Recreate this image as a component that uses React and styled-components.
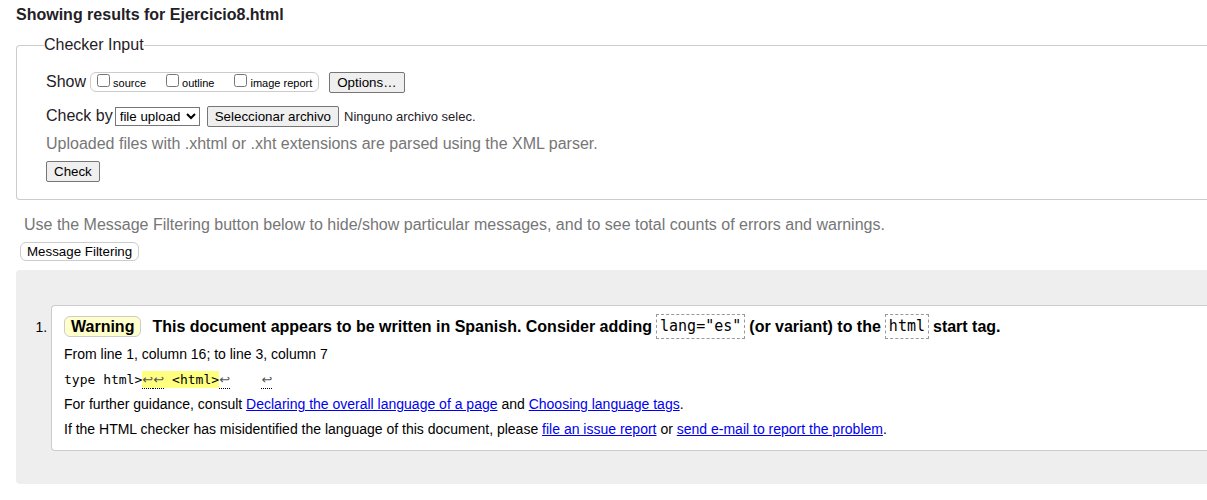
import React, { useRef } from "react";
import styled, { createGlobalStyle } from "styled-components";

const GlobalStyle = createGlobalStyle`
  * { box-sizing: border-box; }
  body {
    margin: 0;
    background: #fff;
    color: #000;
    font-family: "Liberation Sans", Arial, sans-serif;
    font-size: 14px;
  }
`;

const Page = styled.main`
  padding: 5px 0 15px 16px;
`;

const Title = styled.h1`
  margin: 0 0 10px;
  font-size: 16px;
  line-height: 20px;
  color: #1f2126;
`;

const InputPanel = styled.fieldset`
  margin: 0;
  padding: 10px 0 12px 29px;
  border: 1px solid #ccc;
  border-right: 0;
  border-radius: 4px 0 0 4px;
  color: #1f2126;
`;

const Legend = styled.legend`
  margin-left: -2px;
  padding: 0;
  font-size: 16px;
  line-height: 20px;
`;

const Row = styled.div`
  display: flex;
  align-items: center;
  height: ${(p) => p.$height || 34}px;
  font-size: 16px;
`;

const RowLabel = styled.label`
  line-height: 20px;
  margin-right: ${(p) => p.$gap || 2}px;
`;

const OptionGroup = styled.div`
  display: flex;
  gap: 20px;
  height: 20px;
  padding: 0 6px;
  margin-right: 10px;
  border: 1px solid #ccc;
  border-radius: 6px;
`;

const Option = styled.label`
  display: flex;
  gap: 3px;
  font-size: 11px;
  line-height: 20px;
  color: #000;
`;

const Checkbox = styled.input`
  width: 13px;
  height: 13px;
  margin: 1px 0 0;
`;

const Button = styled.button`
  height: 21px;
  padding: 0 7px;
  border: 1px solid #767676;
  border-radius: 2px;
  background: #efefef;
  color: #000;
  font-family: inherit;
  line-height: 19px;
`;

const Select = styled.select`
  width: 85px;
  height: 19px;
  margin-right: 7px;
  padding: 0;
  border: 1px solid #767676;
  border-radius: 0;
  background: #fff;
  color: #000;
  font-family: inherit;
`;

const FileName = styled.span`
  margin-left: 5px;
  font-size: 13px;
`;

const Hint = styled.p`
  margin: ${(p) => p.$margin || "0"};
  font-size: 16px;
  line-height: 22px;
  color: #767676;
`;

const FilterButton = styled(Button)`
  display: block;
  height: 19px;
  margin: 6px 0 9px 4px;
  padding: 0 6px;
  border-color: #ccc;
  border-radius: 6px;
  background: #fff;
  line-height: 17px;
`;

const Results = styled.ol`
  margin: 0;
  padding: 35px 0 33px 35px;
  border-radius: 4px 0 0 4px;
  background: #eee;
`;

const Message = styled.li`
  padding: 7px 12px 8px;
  border: 1px solid #ccc;
  border-right: 0;
  border-radius: 4px 0 0 4px;
  background: #fff;
`;

const Headline = styled.h2`
  display: flex;
  align-items: center;
  gap: 4px;
  height: 27px;
  margin: 0 0 2px;
  font-size: 16px;
`;

const Badge = styled.span`
  margin-right: 7px;
  padding: 0 6px;
  border: 1px solid #ccc;
  border-radius: 6px;
  background: #ffc;
  line-height: 19px;
`;

const Code = styled.code`
  padding: 0 3px;
  border: 1px dashed #999;
  font-family: "DejaVu Sans Mono", monospace;
  font-size: 15px;
  font-weight: 400;
  line-height: 23px;
`;

const Line = styled.p`
  margin: 0;
  line-height: 25px;
`;

const Extract = styled.code`
  display: flex;
  align-items: center;
  height: 25px;
  font-family: "DejaVu Sans Mono", monospace;
  font-size: 13px;
  line-height: 17px;
  white-space: pre;
`;

const Highlight = styled.mark`
  display: flex;
  background: #ffff80;
  color: inherit;
`;

const Break = styled.span`
  width: 11px;
  height: 18px;
  margin-bottom: -1px;
  border-bottom: 1px dotted #000;
  color: #555;
  font-family: "DejaVu Sans", sans-serif;
  text-align: center;
`;

const Link = styled.a`
  color: #00e;
`;

const outputs = ["source", "outline", "image report"];

export default function App() {
  const file = useRef(null);
  return (
    <>
      <GlobalStyle />
      <Page>
        <Title>Showing results for Ejercicio8.html</Title>
        <InputPanel>
          <Legend>Checker Input</Legend>
          <Row>
            <RowLabel as="span" $gap={4}>Show</RowLabel>
            <OptionGroup>
              {outputs.map((name) => (
                <Option key={name}>
                  <Checkbox type="checkbox" />
                  {name}
                </Option>
              ))}
            </OptionGroup>
            <Button type="button">Options…</Button>
          </Row>
          <Row>
            <RowLabel htmlFor="method">Check by</RowLabel>
            <Select id="method">
              <option>file upload</option>
            </Select>
            <input ref={file} type="file" hidden aria-label="Seleccionar archivo" />
            <Button type="button" onClick={() => file.current.click()}>
              Seleccionar archivo
            </Button>
            <FileName>Ninguno archivo selec.</FileName>
          </Row>
          <Hint>Uploaded files with .xhtml or .xht extensions are parsed using the XML parser.</Hint>
          <Row $height={32}>
            <Button type="button">Check</Button>
          </Row>
        </InputPanel>
        <Hint $margin="14px 0 0 8px">
          Use the Message Filtering button below to hide/show particular messages, and to see total
          counts of errors and warnings.
        </Hint>
        <FilterButton type="button">Message Filtering</FilterButton>
        <Results>
          <Message>
            <Headline>
              <Badge>Warning</Badge>
              <span>This document appears to be written in Spanish. Consider adding</span>
              <Code>lang="es"</Code>
              <span>(or variant) to the</span>
              <Code>html</Code>
              <span>start tag.</span>
            </Headline>
            <Line>From line 1, column 16; to line 3, column 7</Line>
            <Extract>
              type html&gt;
              <Highlight>
                <Break>↩</Break>
                <Break>↩</Break>
                {" <html>"}
              </Highlight>
              <Break>↩</Break>
              <span>{"    "}</span>
              <Break>↩</Break>
            </Extract>
            <Line>
              For further guidance, consult{" "}
              <Link href="#declaring">Declaring the overall language of a page</Link> and{" "}
              <Link href="#choosing">Choosing language tags</Link>.
            </Line>
            <Line>
              If the HTML checker has misidentified the language of this document, please{" "}
              <Link href="#issue">file an issue report</Link> or{" "}
              <Link href="#mail">send e-mail to report the problem</Link>.
            </Line>
          </Message>
        </Results>
      </Page>
    </>
  );
}
